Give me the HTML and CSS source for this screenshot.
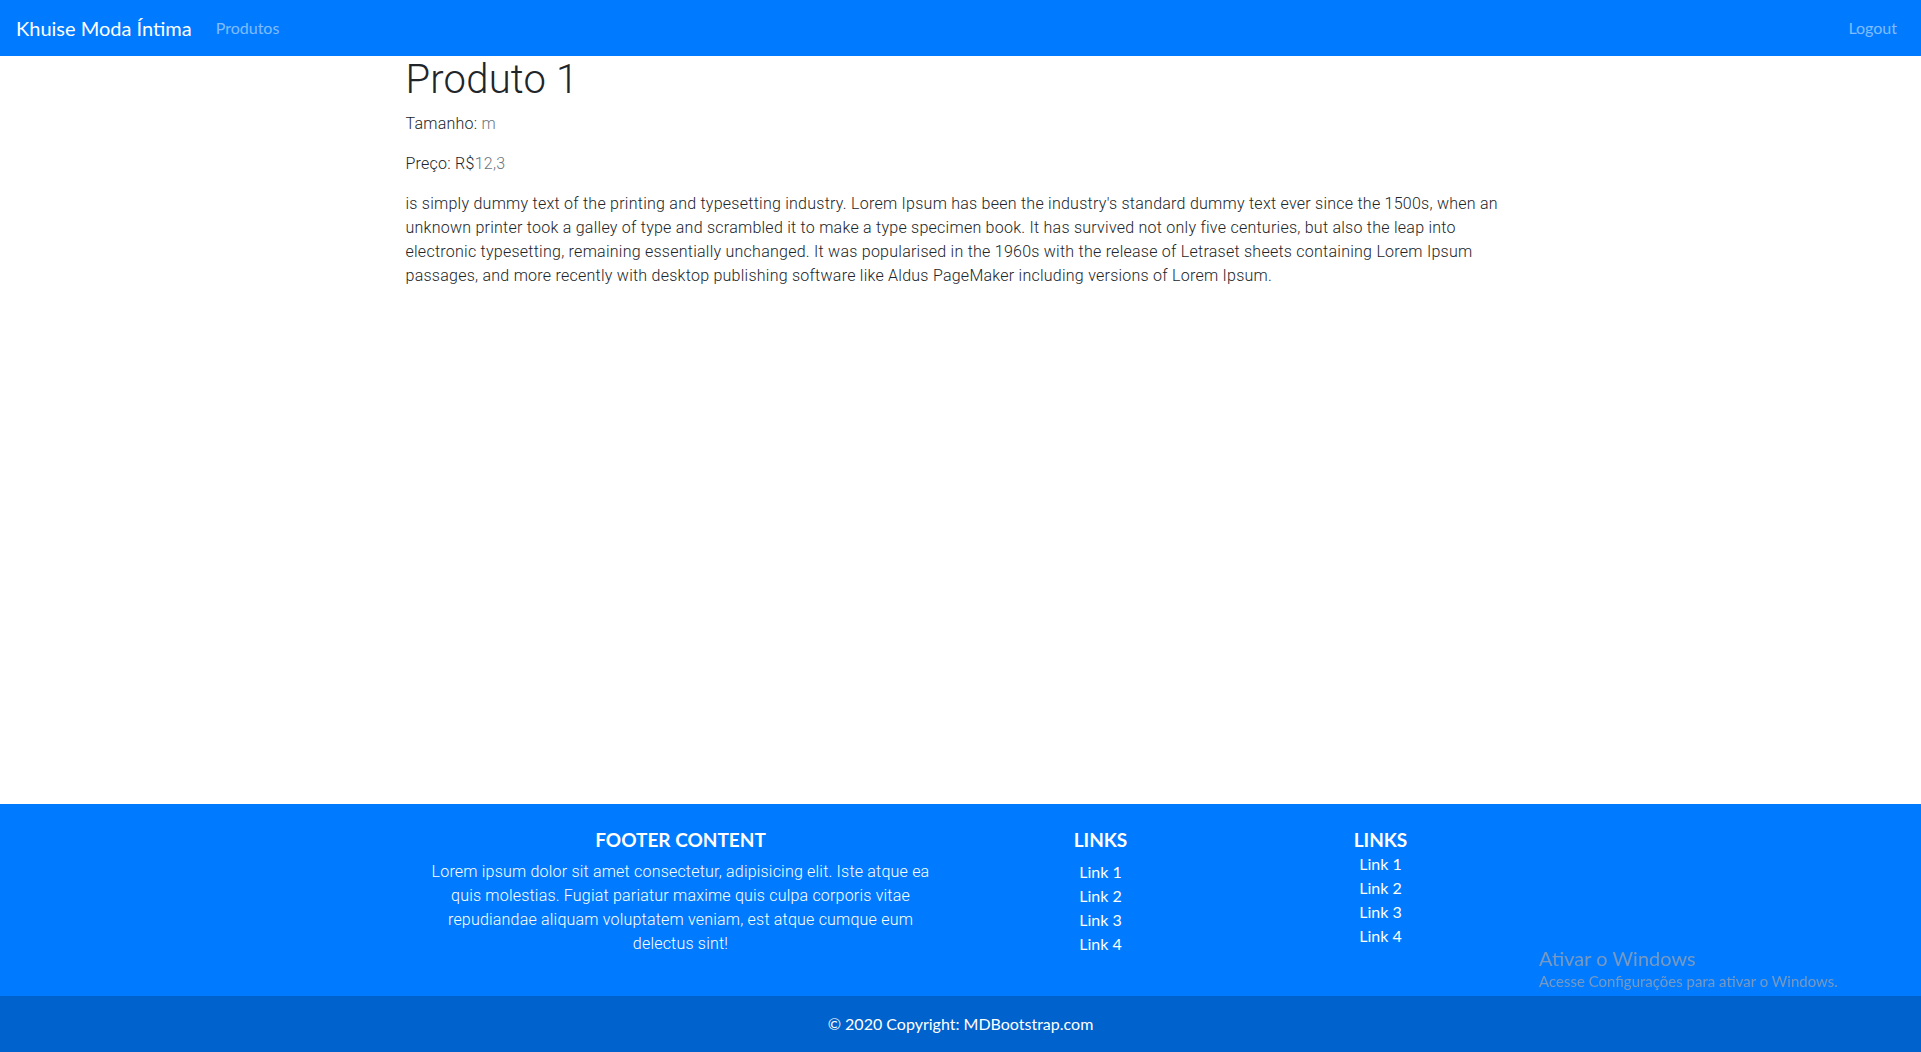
FILE: index.html
```html
<!DOCTYPE html>
<html lang="pt-BR">
<head>
<meta charset="utf-8">
<title>Produto 1</title>
<link rel="stylesheet" href="styles.css">
</head>
<body>
<nav class="navbar">
  <a class="brand" href="#">Khuise Moda Íntima</a>
  <a class="nav-link" href="#">Produtos</a>
  <a class="nav-link nav-right" href="#">Logout</a>
</nav>

<main class="container">
  <h1 class="title">Produto 1</h1>
  <p class="meta">Tamanho: <span class="muted">m</span></p>
  <p class="meta">Preço: R$<span class="muted">12,3</span></p>
  <p class="desc">is simply dummy text of the printing and typesetting industry. Lorem Ipsum has been the industry's standard dummy text ever since the 1500s, when an unknown printer took a galley of type and scrambled it to make a type specimen book. It has survived not only five centuries, but also the leap into<br>electronic typesetting, remaining essentially unchanged. It was popularised in the 1960s with the release of Letraset sheets containing Lorem Ipsum passages, and more recently with desktop publishing software like Aldus PageMaker including versions of Lorem Ipsum.</p>
</main>

<footer class="page-footer">
  <div class="footer-row">
    <div class="footer-col">
      <h5 class="footer-title">Footer Content</h5>
      <p class="footer-text">Lorem ipsum dolor sit amet consectetur, adipisicing elit. Iste atque ea quis molestias. Fugiat pariatur maxime quis culpa corporis vitae repudiandae aliquam voluptatem veniam, est atque cumque eum delectus sint!</p>
    </div>
    <div class="footer-col">
      <h5 class="footer-title">Links</h5>
      <ul class="footer-links">
        <li><a href="#">Link 1</a></li>
        <li><a href="#">Link 2</a></li>
        <li><a href="#">Link 3</a></li>
        <li><a href="#">Link 4</a></li>
      </ul>
    </div>
    <div class="footer-col">
      <h5 class="footer-title footer-title-tight">Links</h5>
      <ul class="footer-links">
        <li><a href="#">Link 1</a></li>
        <li><a href="#">Link 2</a></li>
        <li><a href="#">Link 3</a></li>
        <li><a href="#">Link 4</a></li>
      </ul>
    </div>
  </div>
  <div class="footer-copyright">© 2020 Copyright: <a href="#">MDBootstrap.com</a></div>
</footer>

<div class="win-watermark">
  <div class="win-title">Ativar o Windows</div>
  <div class="win-sub">Acesse Configurações para ativar o Windows.</div>
</div>
</body>
</html>
```
FILE: styles.css
```css
* { box-sizing: border-box; }

html, body { height: 100%; }

body {
  margin: 0;
  min-height: 100vh;
  display: flex;
  flex-direction: column;
  font-family: Roboto, "Liberation Sans", sans-serif;
  font-weight: 300;
  font-size: 16px;
  line-height: 24px;
  letter-spacing: 0.25px;
  color: #212529;
  background: #fff;
}

a { text-decoration: none; color: inherit; }

/* Navbar */
.navbar {
  display: flex;
  align-items: center;
  height: 56px;
  padding: 8px 16px;
  background: #007bff;
  font-family: Lato, "Liberation Sans", sans-serif;
  font-weight: 400;
  letter-spacing: 0;
}

.brand {
  color: #fff;
  font-size: 20px;
  line-height: 30px;
  padding: 5px 0;
  margin-right: 16px;
}

.nav-link {
  color: rgba(255, 255, 255, 0.5);
  font-size: 16px;
  line-height: 24px;
  padding: 8px;
}

.nav-right { margin-left: auto; }

/* Main content */
.container {
  flex: 1;
  width: 1140px;
  margin: 0 auto;
  padding: 0 15px;
}

.title {
  margin: 0 0 8px;
  font-size: 40px;
  line-height: 48px;
  font-weight: 300;
  letter-spacing: 0.2px;
  color: #212529;
}

.meta,
.desc {
  margin: 0 0 16px;
}

.muted { color: #6c757d; }

/* Footer */
.page-footer {
  background: #007bff;
  color: #fff;
}

.footer-row {
  display: grid;
  grid-template-columns: 560px 280px 280px;
  width: 1120px;
  margin: 0 auto;
  padding: 24px 0 24px;
  text-align: center;
}

.footer-col { padding: 0 15px; }

.footer-title {
  margin: 0 0 8px;
  font-family: Lato, "Liberation Sans", sans-serif;
  font-size: 19px;
  line-height: 24px;
  font-weight: 700;
  letter-spacing: 0;
  text-transform: uppercase;
}

.footer-title-tight { margin-bottom: 0; }

.footer-text {
  margin: 0 0 16px;
  font-weight: 300;
  letter-spacing: 0.2px;
}

.footer-links {
  list-style: none;
  margin: 0 0 16px;
  padding: 0;
  font-family: Lato, "Liberation Sans", sans-serif;
  font-weight: 400;
  letter-spacing: 0;
}

.footer-links a { color: #fff; }

.footer-copyright {
  background: #0062cc;
  height: 56px;
  padding: 16px 0;
  text-align: center;
  font-family: Lato, "Liberation Sans", sans-serif;
  font-weight: 400;
  letter-spacing: 0;
  color: #fff;
}

/* Windows activation overlay */
.win-watermark {
  position: fixed;
  left: 1539px;
  top: 944px;
  font-family: Lato, "Liberation Sans", sans-serif;
  font-weight: 400;
  letter-spacing: 0;
  color: rgba(165, 165, 170, 0.72);
  pointer-events: none;
}

.win-title {
  font-size: 20px;
  line-height: 28px;
}

.win-sub {
  font-size: 15px;
  line-height: 18px;
}
```
